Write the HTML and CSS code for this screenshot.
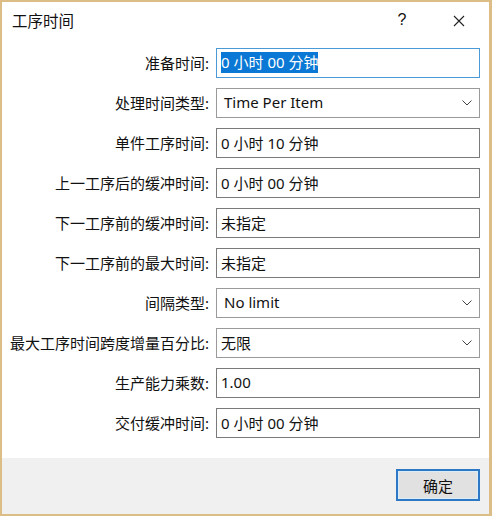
FILE: index.html
```html
<!DOCTYPE html>
<html lang="zh-CN">
<head>
  <meta charset="UTF-8" />
  <title>工序时间</title>
  <link rel="stylesheet" href="styles.css">
</head>
<body>
  <div class="dialog">
    <div class="title-bar">
      <span class="title">工序时间</span>
      <span class="help">?</span>
      <span class="close">
        <svg width="12" height="12" viewBox="0 0 12 12"><path d="M1 1L11 11M11 1L1 11" stroke="#222" stroke-width="1.1" fill="none"/></svg>
      </span>
    </div>

    <div class="form">
      <label>准备时间:</label>
      <div class="field focused"><span class="selected">0 小时 00 分钟</span></div>

      <label>处理时间类型:</label>
      <div class="field combo"><span class="latin">Time Per Item</span><svg class="chev" width="10" height="6" viewBox="0 0 10 6"><path d="M0.5 0.5L5 5L9.5 0.5" stroke="#444" fill="none"/></svg></div>

      <label>单件工序时间:</label>
      <div class="field">0 小时 10 分钟</div>

      <label>上一工序后的缓冲时间:</label>
      <div class="field">0 小时 00 分钟</div>

      <label>下一工序前的缓冲时间:</label>
      <div class="field">未指定</div>

      <label>下一工序前的最大时间:</label>
      <div class="field">未指定</div>

      <label>间隔类型:</label>
      <div class="field combo"><span class="latin">No limit</span><svg class="chev" width="10" height="6" viewBox="0 0 10 6"><path d="M0.5 0.5L5 5L9.5 0.5" stroke="#444" fill="none"/></svg></div>

      <label>最大工序时间跨度增量百分比:</label>
      <div class="field combo"><span>无限</span><svg class="chev" width="10" height="6" viewBox="0 0 10 6"><path d="M0.5 0.5L5 5L9.5 0.5" stroke="#444" fill="none"/></svg></div>

      <label>生产能力乘数:</label>
      <div class="field">1.00</div>

      <label>交付缓冲时间:</label>
      <div class="field">0 小时 00 分钟</div>
    </div>

    <div class="footer">
      <button type="button">确定</button>
    </div>
  </div>
</body>
</html>
```

FILE: styles.css
```css
body {
  margin: 0;
  font-family: "Noto Sans", "Noto Sans CJK SC", sans-serif;
  font-size: 15px;
  color: #111;
  background-color: #fff;
}

.dialog {
  width: 492px;
  height: 516px;
  box-sizing: border-box;
  border: 2px solid #dcbd85;
  border-right-width: 3px;
  display: flex;
  flex-direction: column;
  background-color: #fff;
}

.title-bar {
  height: 38px;
  display: flex;
  align-items: center;
  padding-left: 10px;
}

.title {
  flex: 1;
  font-size: 15.5px;
  padding-bottom: 2px;
}

.help {
  width: 20px;
  text-align: center;
  font-family: "Liberation Sans", sans-serif;
  font-size: 16px;
  margin-right: 41px;
  padding-bottom: 2px;
}

.close {
  width: 12px;
  margin-right: 24px;
  display: flex;
}

.form {
  display: grid;
  grid-template-columns: 207px 264px;
  column-gap: 7px;
  row-gap: 10px;
  grid-auto-rows: 30px;
  padding-top: 8px;
  padding-bottom: 20px;
}

.form label {
  display: flex;
  align-items: center;
  justify-content: flex-end;
  white-space: nowrap;
  padding-bottom: 2px;
}

.field {
  box-sizing: border-box;
  border: 1px solid #7a7a7a;
  display: flex;
  align-items: center;
  padding-left: 4px;
  padding-bottom: 2px;
  white-space: nowrap;
}

.field.focused {
  border-color: #4a9ad8;
}

.selected {
  background-color: #0a78d4;
  color: #fff;
  line-height: 21px;
}

.combo {
  border-color: #9a9a9a;
  justify-content: space-between;
  padding-right: 7px;
}

.latin {
  padding-left: 3px;
  font-size: 15px;
}

.chev {
  margin-top: 2px;
}

.footer {
  flex: 1;
  background-color: #f0f0f0;
  display: flex;
  justify-content: flex-end;
  align-items: flex-start;
  padding-top: 11px;
  padding-right: 9px;
}

button {
  width: 84px;
  height: 32px;
  background-color: #e1e1e1;
  border: 2px solid #2c78c4;
  box-shadow: inset 0 0 0 1px #d8ecfa;
  font-family: "Noto Sans CJK SC", sans-serif;
  font-size: 15px;
  color: #111;
  padding: 0;
}
```
